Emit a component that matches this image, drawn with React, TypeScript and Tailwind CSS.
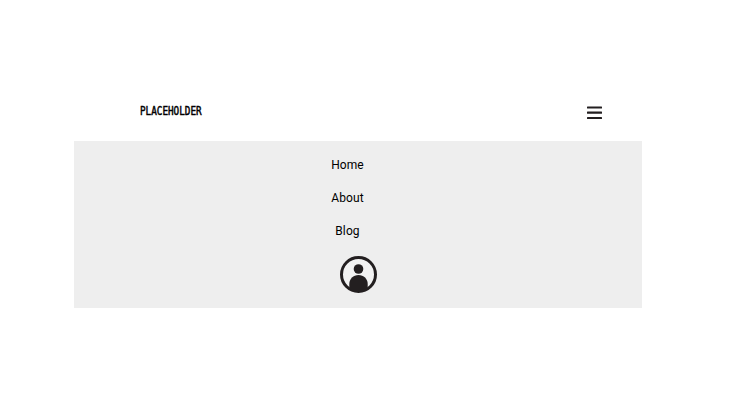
const links = ["Home", "About", "Blog"];

function Logo() {
  return (
    <a className="mb-[2px] block h-[14px] w-[62px] whitespace-nowrap font-['DejaVu_Sans_Mono',monospace] text-[12px] leading-[14px] text-black [-webkit-text-stroke:0.5px_black]">
      <span className="inline-block origin-left scale-x-[0.775]">PLACEHOLDER</span>
    </a>
  );
}

function MenuButton() {
  return (
    <button aria-label="Menu" className="mt-[2px]">
      <svg viewBox="0 0 15 14" className="block h-[14px] w-[15px]" fill="#231f20">
        <rect y="0.4" width="15" height="2.1" rx="0.5" />
        <rect y="5.6" width="15" height="2.1" rx="0.5" />
        <rect y="10.9" width="15" height="2.1" rx="0.5" />
      </svg>
    </button>
  );
}

function Avatar() {
  return (
    <svg viewBox="0 0 37 37" className="block size-[37px]" aria-label="Account">
      <circle cx="18.5" cy="18.5" r="17" fill="#f2f2f2" stroke="#231f20" strokeWidth="3" />
      <circle cx="18.5" cy="13" r="4.8" fill="#231f20" />
      <path d="M9.3 33.5V28c0-5 4-8.9 9.2-8.9s9.2 3.9 9.2 8.9v5.5c-2.7 1.7-5.8 2.5-9.2 2.5s-6.5-.8-9.2-2.5z" fill="#231f20" />
    </svg>
  );
}

export default function App() {
  return (
    <div className="min-h-[415px] bg-white pt-[82px] pr-[91px] pl-[74px] font-[Roboto,sans-serif]">
      <header className="flex h-[59px] items-center justify-between pr-[40px] pl-[66px]">
        <Logo />
        <MenuButton />
      </header>
      <nav className="flex h-[167px] flex-col items-center bg-[#eeeeee] pt-[14px]">
        <ul className="mr-[21px] flex flex-col items-center gap-[13px] text-[12px] leading-5 tracking-[0.1px] text-black">
          {links.map((link) => (
            <li key={link}>{link}</li>
          ))}
        </ul>
        <div className="mt-[15px]">
          <Avatar />
        </div>
      </nav>
    </div>
  );
}
